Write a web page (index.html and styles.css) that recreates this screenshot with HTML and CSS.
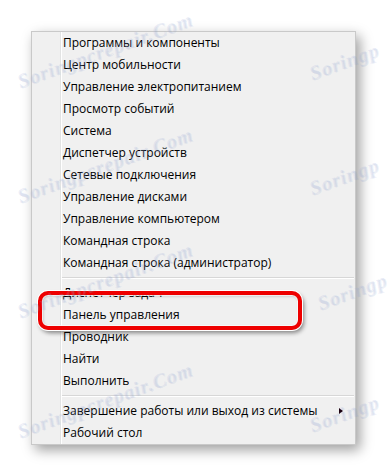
FILE: index.html
```html
<!DOCTYPE html>
<html lang="ru">
<head>
<meta charset="utf-8">
<title>Меню</title>
<link rel="stylesheet" href="styles.css">
</head>
<body>
<div class="menu">
  <ul class="group">
    <li class="item">Программы и компоненты</li>
    <li class="item">Центр мобильности</li>
    <li class="item">Управление электропитанием</li>
    <li class="item">Просмотр событий</li>
    <li class="item">Система</li>
    <li class="item">Диспетчер устройств</li>
    <li class="item">Сетевые подключения</li>
    <li class="item">Управление дисками</li>
    <li class="item">Управление компьютером</li>
    <li class="item">Командная строка</li>
    <li class="item">Командная строка (администратор)</li>
  </ul>
  <div class="sep"></div>
  <ul class="group">
    <li class="item">Диспетчер задач</li>
    <li class="item">Панель управления</li>
    <li class="item">Проводник</li>
    <li class="item">Найти</li>
    <li class="item">Выполнить</li>
  </ul>
  <div class="sep"></div>
  <ul class="group">
    <li class="item has-sub">Завершение работы или выход из системы<span class="arrow"></span></li>
    <li class="item">Рабочий стол</li>
  </ul>
  <div class="highlight"></div>
</div>
<div class="wm wm1">Soringpcrepair.Com</div>
<div class="wm wm2">Soringpcrepair.Com</div>
<div class="wm wm3">Soringpcrepair.Com</div>
<div class="wm wm4">Soringpcrepair.Com</div>
<div class="wm wm5">Soringp</div>
<div class="wm wm6">Soringp</div>
<div class="wm wm7">Soringp</div>
<div class="wm wm8">Soringp</div>
</body>
</html>
```
FILE: styles.css
```css
html, body {
  margin: 0;
  padding: 0;
  background: #ffffff;
  width: 389px;
  height: 474px;
  overflow: hidden;
  position: relative;
}

.menu {
  position: relative;
  margin: 31px 0 0 31px;
  width: 325px;
  box-sizing: border-box;
  border: 1px solid #c9c9c9;
  background-color: #f0f0f0;
  background-image: linear-gradient(to right, transparent 28px, #e2e3e3 28px, #e2e3e3 29px, #ffffff 29px, #ffffff 30px, transparent 30px);
  box-shadow: 4px 5px 12px rgba(0, 0, 0, 0.38);
  font-family: "Open Sans", "Noto Sans", sans-serif;
  font-size: 12px;
  color: #000000;
}

.group {
  list-style: none;
  margin: 0;
  padding: 0;
}

.item {
  height: 22px;
  line-height: 22px;
  padding-left: 31px;
  position: relative;
  white-space: nowrap;
}

.arrow {
  position: absolute;
  right: 12px;
  top: 8px;
  width: 0;
  height: 0;
  border-top: 3px solid transparent;
  border-bottom: 3px solid transparent;
  border-left: 4px solid #1a0010;
}

.sep {
  height: 1px;
  margin: 3px 1px 3px 30px;
  background: #d7d7d7;
  border-bottom: 1px solid #ffffff;
}

.highlight {
  position: absolute;
  left: 6px;
  top: 259px;
  width: 264px;
  height: 39px;
  box-sizing: border-box;
  border: 4px solid #ee0000;
  border-radius: 10px;
  box-shadow: 0 0 0 1px #ffffff, 2px 3px 4px rgba(0, 0, 0, 0.45), inset 0 0 0 1px rgba(255, 255, 255, 0.7), inset 1px 1px 3px rgba(0, 0, 0, 0.25);
}

.wm {
  position: absolute;
  font-family: "Liberation Serif", serif;
  font-style: italic;
  font-weight: bold;
  font-size: 20px;
  letter-spacing: 1px;
  color: rgba(160, 178, 220, 0.2);
  text-shadow: 1px 1px 0 rgba(120, 140, 190, 0.12);
  transform: rotate(-20deg);
  transform-origin: left bottom;
  white-space: nowrap;
  pointer-events: none;
}

.wm1 { left: 22px; top: 70px; }
.wm2 { left: 22px; top: 185px; }
.wm3 { left: 22px; top: 300px; }
.wm4 { left: 22px; top: 420px; }
.wm5 { left: 314px; top: 62px; }
.wm6 { left: 314px; top: 177px; }
.wm7 { left: 322px; top: 292px; }
.wm8 { left: 314px; top: 414px; }
```
